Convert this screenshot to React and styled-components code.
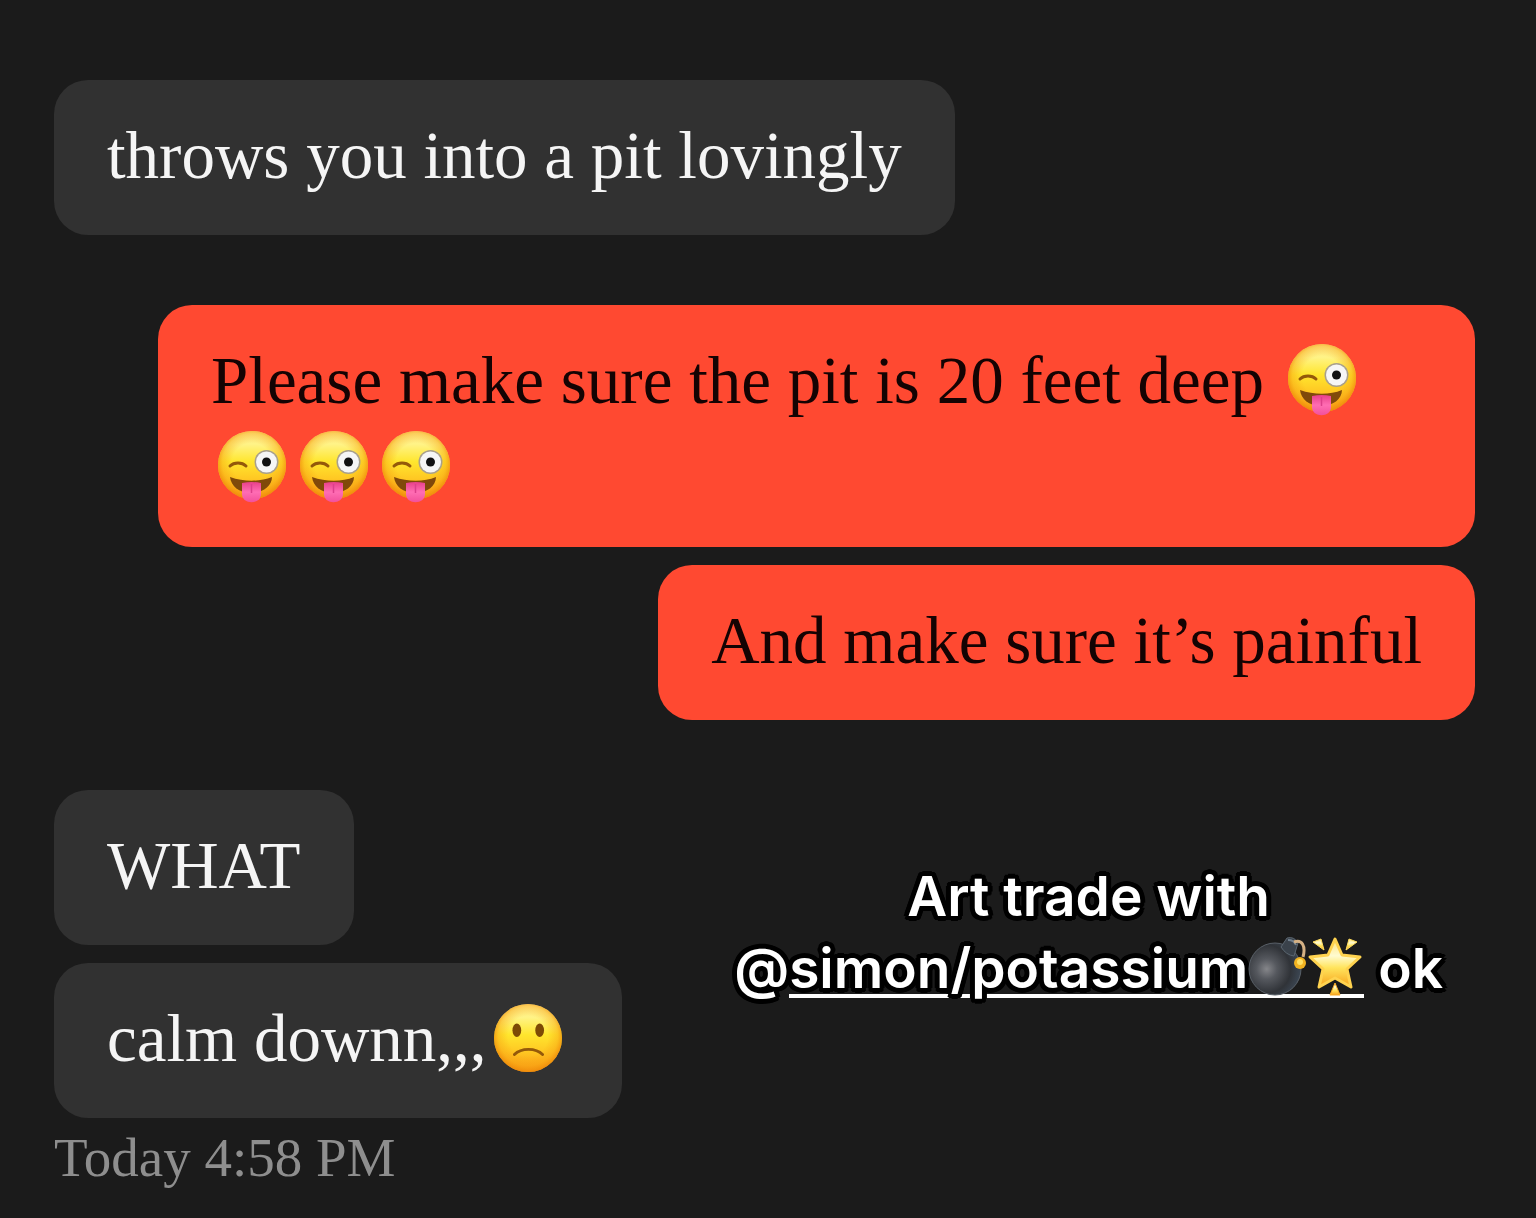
import styled, { createGlobalStyle } from 'styled-components';

const GlobalStyle = createGlobalStyle`
  body {
    margin: 0;
    background-color: #1b1b1b;
  }
`;

const messages = [
  { id: 1, mine: false, items: [{ text: 'throws you into a pit lovingly' }] },
  {
    id: 2,
    mine: true,
    items: [
      { text: 'Please make sure the pit is 20 feet deep ', zany: 4 },
      { text: 'And make sure it’s painful' },
    ],
  },
];

const lastMessages = [{ text: 'WHAT' }, { text: 'calm downn,,,', sad: true }];

function Gradients() {
  return (
    <GradientDefs aria-hidden="true">
      <defs>
        <linearGradient id="faceFill" x1="0" y1="0" x2="0" y2="1">
          <stop offset="0" stopColor="#fff09a" />
          <stop offset="0.2" stopColor="#fff385" />
          <stop offset="0.45" stopColor="#ffe62e" />
          <stop offset="0.7" stopColor="#ffc823" />
          <stop offset="1" stopColor="#f99614" />
        </linearGradient>
        <radialGradient id="faceEdge" cx="0.5" cy="0.47" r="0.53">
          <stop offset="0.55" stopColor="#f7a413" stopOpacity="0" />
          <stop offset="0.82" stopColor="#f7a413" stopOpacity="0.45" />
          <stop offset="1" stopColor="#ee8a0a" stopOpacity="0.95" />
        </radialGradient>
        <linearGradient id="tongueFill" x1="0" y1="0" x2="0" y2="1">
          <stop offset="0" stopColor="#e8408a" />
          <stop offset="0.5" stopColor="#ff6db4" />
          <stop offset="1" stopColor="#f2509c" />
        </linearGradient>
        <radialGradient id="bombFill" cx="0.34" cy="0.5" r="0.66">
          <stop offset="0" stopColor="#85868a" />
          <stop offset="0.3" stopColor="#55585e" />
          <stop offset="0.7" stopColor="#303338" />
          <stop offset="1" stopColor="#3c4754" />
        </radialGradient>
        <linearGradient id="starFill" x1="0" y1="0" x2="0" y2="1">
          <stop offset="0" stopColor="#ffe27a" />
          <stop offset="0.35" stopColor="#fffbd0" />
          <stop offset="0.6" stopColor="#ffe45c" />
          <stop offset="1" stopColor="#f7a21b" />
        </linearGradient>
      </defs>
    </GradientDefs>
  );
}

function ZanyFace() {
  return (
    <Emoji viewBox="0 0 68 72" role="img" aria-label="zany face">
      <circle cx="34" cy="34" r="34" fill="url(#faceFill)" />
      <circle cx="34" cy="34" r="34" fill="url(#faceEdge)" />
      <path
        d="M12 35C16 31 24 31 28 35"
        fill="none"
        stroke="#94590a"
        strokeWidth="3"
        strokeLinecap="round"
      />
      <circle cx="48.500" cy="31" r="12" fill="#a9a08c" />
      <circle cx="48.500" cy="31" r="10.500" fill="#f6f6f6" />
      <circle cx="48.500" cy="31" r="4.500" fill="#111111" />
      <path
        d="M12 46C26 51 42 51 54 46C54 55 45 62 33 62C21 62 13 55 12 46Z"
        fill="#80490a"
      />
      <path
        d="M24 52Q34 50 43 52V63C43 74 24 74 24 63Z"
        fill="url(#tongueFill)"
      />
      <path d="M33.500 53V62" stroke="#dc3f8c" strokeWidth="1.500" />
    </Emoji>
  );
}

function SadFace() {
  return (
    <Emoji viewBox="0 0 70 72" role="img" aria-label="slightly frowning face">
      <circle cx="35" cy="36" r="35" fill="url(#faceFill)" />
      <circle cx="35" cy="36" r="35" fill="url(#faceEdge)" />
      <ellipse cx="23.500" cy="28" rx="4.500" ry="7" fill="#7d4a05" />
      <ellipse cx="47" cy="28" rx="4.500" ry="7" fill="#7d4a05" />
      <path
        d="M21 53C28 46 43 46 50 53"
        fill="none"
        stroke="#94590a"
        strokeWidth="3"
        strokeLinecap="round"
      />
    </Emoji>
  );
}

function Bomb() {
  return (
    <CaptionEmoji viewBox="0 0 58 60" role="img" aria-label="bomb">
      <circle
        cx="27"
        cy="33"
        r="26"
        fill="url(#bombFill)"
        stroke="#596068"
        strokeWidth="1"
      />
      <path
        d="M33 11L39 2Q46 0 50 7L46 20Q38 19 33 11Z"
        fill="#3a424b"
        stroke="#5b6670"
        strokeWidth="1"
      />
      <path d="M40 4Q46 4 48 9" fill="none" stroke="#71808e" strokeWidth="2" />
      <path
        d="M46 6C54 3 58 10 55 21"
        fill="none"
        stroke="#d5b184"
        strokeWidth="3"
      />
      <circle cx="52" cy="27" r="6" fill="#f2b321" />
      <circle cx="52" cy="26" r="3" fill="#ffe164" />
    </CaptionEmoji>
  );
}

function GlowingStar() {
  return (
    <CaptionEmoji viewBox="0 0 58 60" role="img" aria-label="glowing star">
      <g fill="url(#starFill)" strokeLinejoin="round">
        <path
          d="M29 3L36 19L54 21L41 33L45 51L29 42L13 51L17 33L4 21L22 19Z"
          stroke="#ffd34f"
          strokeWidth="3"
        />
        <path d="M7 6L15 3L18 14Z" stroke="#ffdc5c" strokeWidth="1" />
        <path d="M51 6L43 3L40 14Z" stroke="#ffdc5c" strokeWidth="1" />
        <path d="M29 47L34 59H24Z" stroke="#f8a925" strokeWidth="1" />
      </g>
    </CaptionEmoji>
  );
}

function Message({ text, zany = 0, sad, mine }) {
  return (
    <Bubble $mine={mine}>
      {text}
      {Array.from({ length: zany }, (_, index) => (
        <ZanyFace key={index} />
      ))}
      {sad && <SadFace />}
    </Bubble>
  );
}

function App() {
  return (
    <Chat>
      <GlobalStyle />
      <Gradients />
      {messages.map(({ id, mine, items }) => (
        <MessageGroup key={id} $mine={mine}>
          {items.map(item => (
            <Message key={item.text} mine={mine} {...item} />
          ))}
        </MessageGroup>
      ))}
      <LastRow>
        <div>
          <MessageGroup>
            {lastMessages.map(item => (
              <Message key={item.text} {...item} />
            ))}
          </MessageGroup>
          <Timestamp>Today 4:58 PM</Timestamp>
        </div>
        <Caption>
          Art trade with
          <br />@
          <Mention href="#simon">
            simon/potassium
            <Bomb />
            <GlowingStar />
          </Mention>{' '}
          ok
        </Caption>
      </LastRow>
    </Chat>
  );
}

const Chat = styled.main`
  display: flex;
  flex-direction: column;
  gap: 70px;
  padding: 80px 61px 0 54px;
  font-family: 'Liberation Serif', serif;
`;

const GradientDefs = styled.svg`
  position: absolute;
  width: 0;
  height: 0;
`;

const MessageGroup = styled.section`
  display: flex;
  flex-direction: column;
  align-items: ${({ $mine }) => ($mine ? 'flex-end' : 'flex-start')};
  gap: 18px;
`;

const Bubble = styled.p`
  box-sizing: border-box;
  max-width: ${({ $mine }) => ($mine ? 'calc(100% - 104px)' : '100%')};
  margin: 0;
  padding: 32px 53px 36px;
  border-radius: 34px;
  background-color: ${({ $mine }) => ($mine ? '#ff4931' : '#313131')};
  color: ${({ $mine }) => ($mine ? '#140303' : '#f5f5f5')};
  font-size: 67px;
  line-height: 87px;
`;

const Emoji = styled.svg`
  width: 68px;
  height: 72px;
  margin: 0 7px;
  vertical-align: -13px;
`;

const LastRow = styled.div`
  display: flex;
  align-items: flex-start;
  justify-content: space-between;
`;

const Caption = styled.p`
  margin: 70px 32px 0 0;
  color: #ffffff;
  font-family: Inter, sans-serif;
  font-size: 55px;
  font-weight: 600;
  line-height: 72px;
  text-align: center;
  white-space: nowrap;
  text-shadow:
    5px 0 #000000,
    4px 3px #000000,
    3px 4px #000000,
    0 5px #000000,
    -3px 4px #000000,
    -4px 3px #000000,
    -5px 0 #000000,
    -4px -3px #000000,
    -3px -4px #000000,
    0 -5px #000000,
    3px -4px #000000,
    4px -3px #000000;
`;

const Mention = styled.a`
  display: inline-block;
  border-bottom: 4px solid #ffffff;
  color: inherit;
  line-height: 50px;
  text-decoration: none;
`;

const CaptionEmoji = styled.svg`
  width: 58px;
  height: 60px;
  margin-bottom: -2px;
  vertical-align: -6px;
`;

const Timestamp = styled.time`
  display: block;
  margin-top: 8px;
  color: #8e8e8e;
  font-size: 55px;
  line-height: 64px;
`;

export default App;
